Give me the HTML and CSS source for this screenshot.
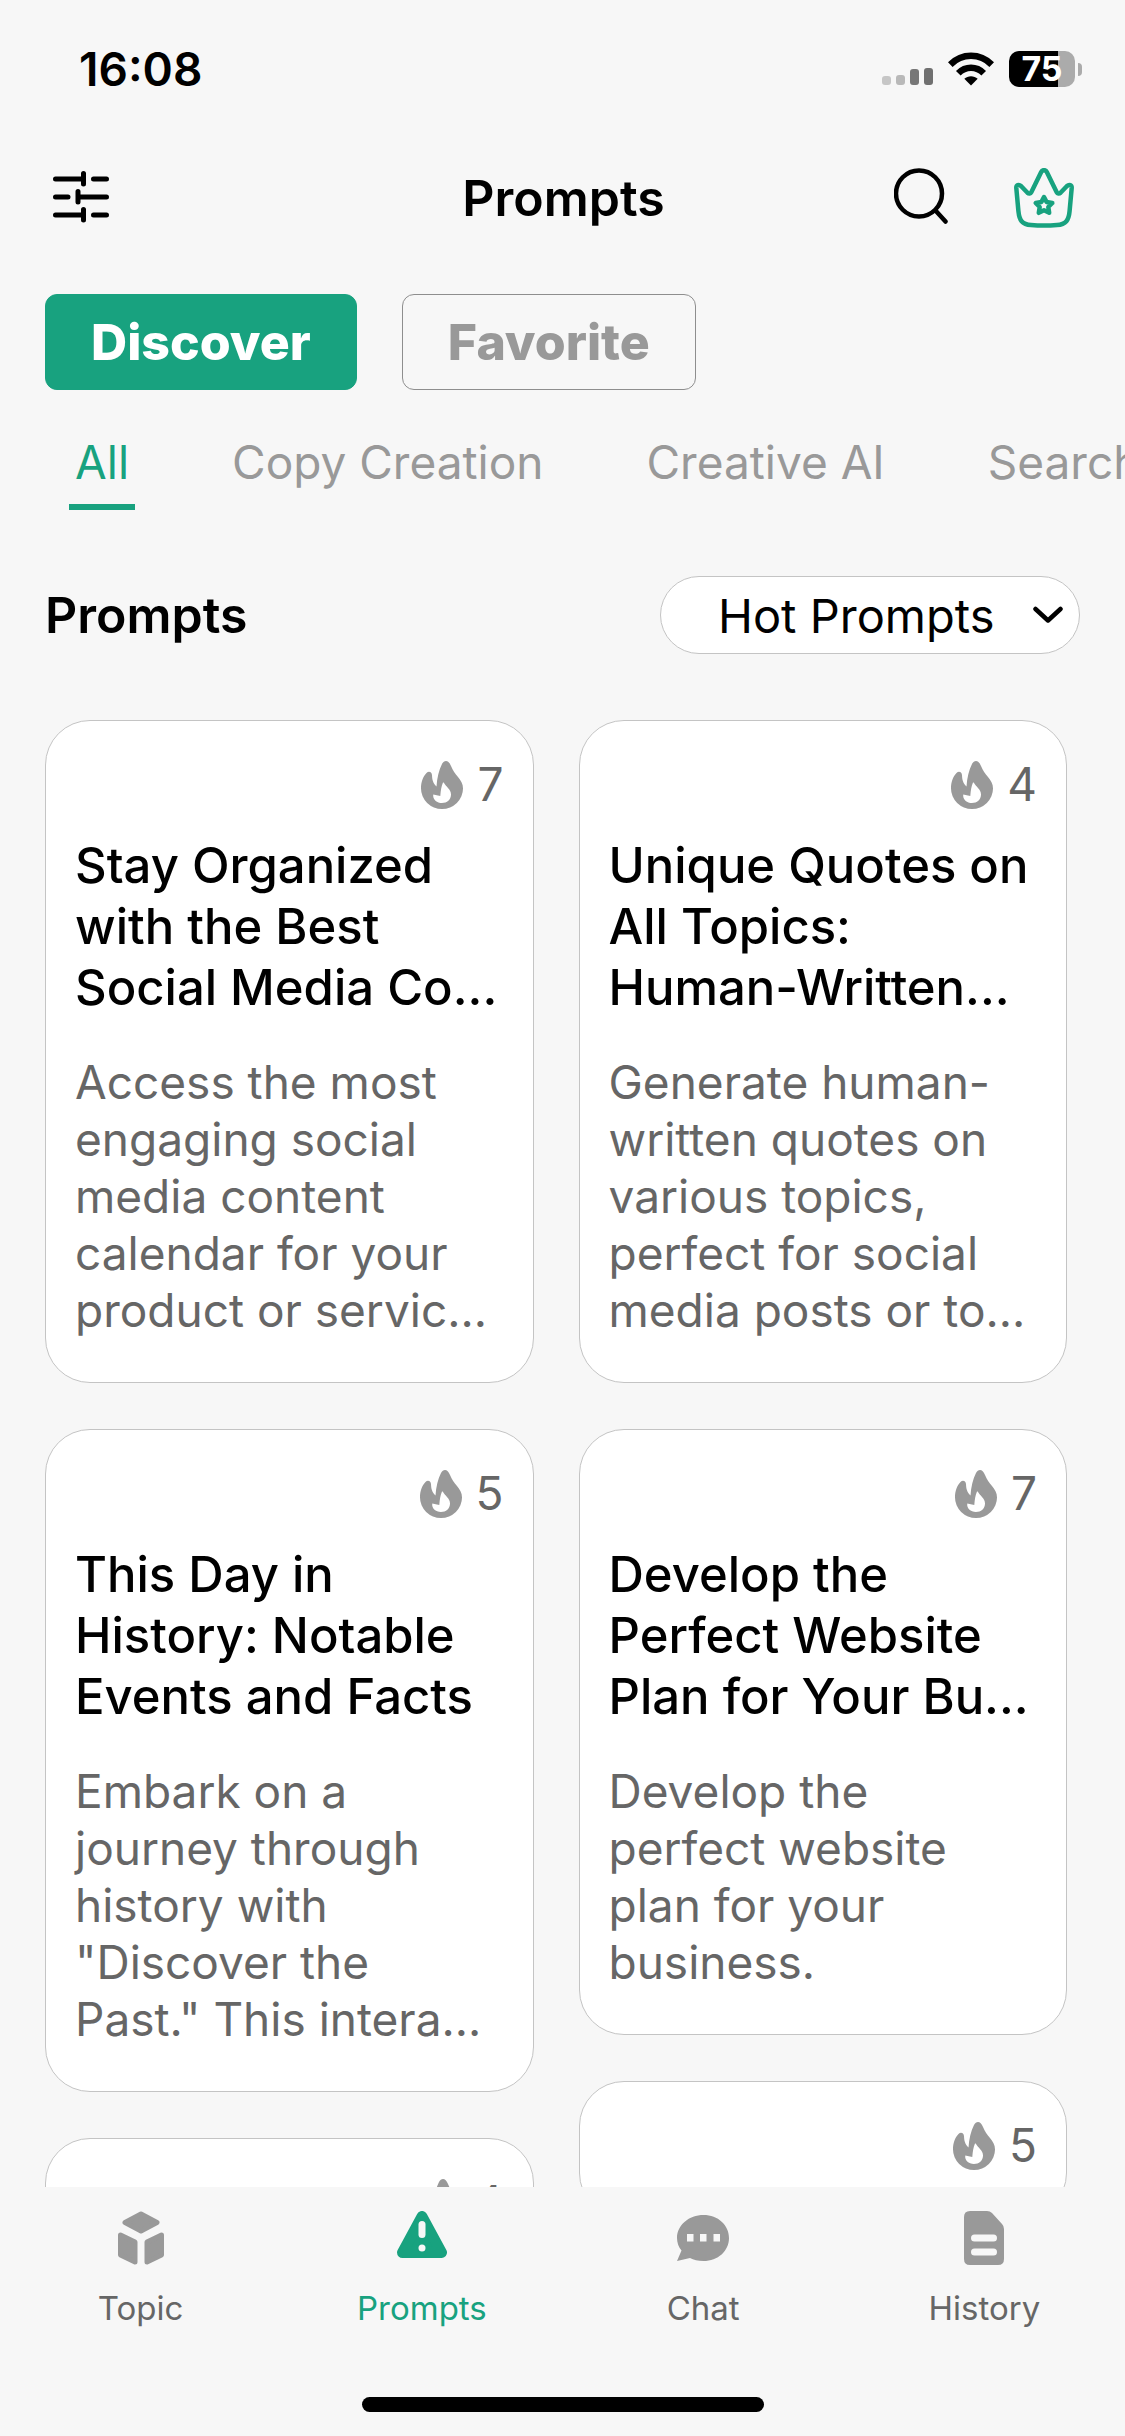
FILE: index.html
```html
<!DOCTYPE html>
<html lang="en">
<head>
<meta charset="utf-8">
<meta name="viewport" content="width=device-width">
<title>Prompts</title>
<link rel="stylesheet" href="styles.css">
</head>
<body>
<svg class="sprite" aria-hidden="true">
  <symbol id="flame" viewBox="0 0 42 48">
    <path fill-rule="evenodd" d="M25 0C27 0 28.500 1.500 30 5C32 10 34 12.500 37 16C40 19.500 42 23 42 27.500A21 20.500 0 0 1 0 27.500C0 21 2 15.500 5.500 12C7.500 10 10.500 10.500 11 14C11.200 19 12 22 15.500 25.500C16 17 18 9 21 3C22 1 23.500 0 25 0ZM22 21.500C20.500 25 19.800 29 19.300 35L12.300 33.500C11.500 38 15.500 42 21 42C26 42 30 38.500 30 33.500C30 28 25 26 22.700 21.500Z"/>
  </symbol>
</svg>

<div class="status">
  <time class="clock">16:08</time>
  <div class="indicators">
    <svg class="signal" width="51" height="34" viewBox="0 0 51 34" aria-label="Signal">
      <rect x="0" y="24" width="9" height="9" rx="3" fill="#c6c6c6"/>
      <rect x="14" y="23" width="9" height="10" rx="3" fill="#b9b9b9"/>
      <rect x="28" y="17" width="9" height="16" rx="3" fill="#777"/>
      <rect x="42" y="16" width="9" height="17" rx="3" fill="#707070"/>
    </svg>
    <svg class="wifi" width="46" height="34" viewBox="0 0 46 34" aria-label="Wi-Fi">
      <path d="M23 33.500L16.300 26.700C20 23.300 26 23.300 29.700 26.700Z"/>
      <path fill="none" stroke="#000" stroke-width="6.500" d="M10.300 21.300C17.500 14 28.500 14 35.700 21.300M2.300 12.600C14 .9 32 .9 43.700 12.600"/>
    </svg>
    <div class="battery"><span class="charge">75</span><span class="pole"></span></div>
  </div>
</div>

<header class="topbar">
  <button class="icon-button" aria-label="Filters">
    <svg width="56" height="54" viewBox="0 0 56 54" fill="none" stroke="#000" stroke-width="5" stroke-linecap="round">
      <path d="M2.500 8H30M30.500 2.500V13M40.500 8H53.500M2.500 26H15M25 20.500V31M25 26H53.500M2.500 44H30M30.500 38.500V49M40.500 44H53.500"/>
    </svg>
  </button>
  <h1 class="page-title">Prompts</h1>
  <div class="actions">
    <button class="icon-button" aria-label="Search">
      <svg width="54" height="60" viewBox="0 0 54 60" fill="none" stroke="#000" stroke-width="4.500" stroke-linecap="round">
        <circle cx="25" cy="25.500" r="23"/><path d="M41.500 42.500L51.500 53.500"/>
      </svg>
    </button>
    <button class="icon-button" aria-label="Premium">
      <svg width="60" height="60" viewBox="0 0 60 60" fill="none" stroke="#18a27f" stroke-width="4.500" stroke-linejoin="round">
        <path d="M2.300 20C2.100 17 4.800 16 7 18L13.500 24.800C14.800 26 16.500 25.800 17.300 24.200L27.200 4C28.400 1.500 31.600 1.500 32.800 4L42.700 24.200C43.500 25.800 45.200 26 46.500 24.800L53 18C55.200 16 57.900 17 57.700 20L55.600 43C54.800 52 52 56.500 43 57C35 57.700 25 57.700 17 57C8 56.500 5.200 52 4.400 43Z"/>
        <path d="M30 29L32.600 34L38.300 35L34.300 39L35.200 44.800L30 42.300L24.800 44.800L25.700 39L21.700 35L27.400 34Z"/>
      </svg>
    </button>
  </div>
</header>

<div class="modes">
  <button class="mode mode-active">Discover</button>
  <button class="mode">Favorite</button>
</div>

<nav class="categories" aria-label="Categories">
  <a class="category category-active" href="#all">All</a>
  <a class="category" href="#copy">Copy Creation</a>
  <a class="category" href="#creative">Creative AI</a>
  <a class="category" href="#search">Search</a>
</nav>

<div class="list-head">
  <h2 class="list-title">Prompts</h2>
  <div class="sort">
    <select class="sort-select" aria-label="Sort prompts">
      <option>Hot Prompts</option>
    </select>
    <svg class="sort-arrow" width="30" height="18" viewBox="0 0 30 18" fill="none" stroke="#000" stroke-width="4.500" stroke-linecap="round" stroke-linejoin="round"><path d="M2.500 3L15 14.500L27.500 3"/></svg>
  </div>
</div>

<main class="cards">
  <div class="column">
    <article class="card">
      <div class="heat"><svg class="flame"><use href="#flame"/></svg>7</div>
      <h3 class="card-title">Stay Organized with the Best Social Media Co...</h3>
      <p class="card-text">Access the most engaging social media content calendar for your product or servic...</p>
    </article>
    <article class="card">
      <div class="heat"><svg class="flame"><use href="#flame"/></svg>5</div>
      <h3 class="card-title">This Day in History: Notable Events and Facts</h3>
      <p class="card-text">Embark on a journey through history with "Discover the Past." This intera...</p>
    </article>
    <article class="card">
      <div class="heat"><svg class="flame"><use href="#flame"/></svg>4</div>
    </article>
  </div>
  <div class="column">
    <article class="card">
      <div class="heat"><svg class="flame"><use href="#flame"/></svg>4</div>
      <h3 class="card-title">Unique Quotes on All Topics: Human-Written...</h3>
      <p class="card-text">Generate human-written quotes on various topics, perfect for social media posts or to...</p>
    </article>
    <article class="card">
      <div class="heat"><svg class="flame"><use href="#flame"/></svg>7</div>
      <h3 class="card-title">Develop the Perfect Website Plan for Your Bu...</h3>
      <p class="card-text">Develop the perfect website plan for your business.</p>
    </article>
    <article class="card">
      <div class="heat"><svg class="flame"><use href="#flame"/></svg>5</div>
    </article>
  </div>
</main>

<footer class="bottom">
  <nav class="tabs" aria-label="Main">
    <a class="tab" href="#topic">
      <svg width="46" height="54" viewBox="0 0 46 54" fill="#999" stroke="#999" stroke-width="5" stroke-linejoin="round"><path d="M23 3L39 11.500L23 20L7 11.500ZM2.500 24L17 31V51L2.500 44ZM43.500 24L29 31V51L43.500 44Z"/></svg>
      Topic
    </a>
    <a class="tab tab-active" href="#prompts">
      <svg width="50" height="54" viewBox="0 0 50 54"><path fill="#18a27f" stroke="#18a27f" stroke-width="11" stroke-linejoin="round" d="M25 5.500L44.500 41.500H5.500Z"/><rect x="21.500" y="10" width="7" height="17" rx="3.500" fill="#f7f7f7"/><circle cx="25" cy="37" r="3.500" fill="#f7f7f7"/></svg>
      Prompts
    </a>
    <a class="tab" href="#chat">
      <svg width="52" height="54" viewBox="0 0 52 54"><path fill="#999" d="M26.500 4C41 4 52 14 52 27C52 40 41 50 26.500 50C21 50 16.500 49 13 47L0 50L4.500 39.500C1.500 36 0 31.500 0 27C0 14 12 4 26.500 4Z"/><path fill="#f7f7f7" d="M10 23h6.500v7.500H10ZM23 23h6.500v7.500H23ZM36.500 23H43v7.500H36.500Z"/></svg>
      Chat
    </a>
    <a class="tab" href="#history">
      <svg width="40" height="54" viewBox="0 0 40 54"><path fill="#999" d="M6 0H23Q26 0 28 2L38 13Q40 15 40 18V48Q40 54 34 54H6Q0 54 0 48V6Q0 0 6 0Z"/><path stroke="#f7f7f7" stroke-width="7" stroke-linecap="round" d="M10.500 27H29.500M10.500 41H29.500"/></svg>
      History
    </a>
  </nav>
  <div class="home-indicator"></div>
</footer>
</body>
</html>
```
FILE: styles.css
```css
* { box-sizing: border-box; }

body {
  margin: 0;
  height: 100vh;
  display: flex;
  flex-direction: column;
  overflow: hidden;
  background: #f7f7f7;
  color: #000;
  font-family: Inter, "Liberation Sans", sans-serif;
  font-size: 46px;
}

button, select { font: inherit; color: inherit; }
button { cursor: pointer; }
a { text-decoration: none; color: inherit; }
h1, h2, h3, p { margin: 0; }
svg { display: block; flex: none; }

.sprite { position: absolute; width: 0; height: 0; }

/* Status bar */
.status {
  display: flex;
  justify-content: space-between;
  align-items: center;
  height: 138px;
  padding: 0 43px 0 79px;
}
.clock { font-weight: 600; }
.indicators { display: flex; align-items: center; gap: 15px; }
.battery { display: flex; align-items: center; gap: 3px; }
.charge {
  width: 66px;
  height: 36px;
  border-radius: 10px;
  background: linear-gradient(to right, #000 75%, #ababab 75%);
  color: #fff;
  font-size: 34px;
  font-weight: 700;
  line-height: 36px;
  text-align: center;
}
.pole { width: 4px; height: 13px; border-radius: 0 4px 4px 0; background: #ababab; }

/* Title bar */
.topbar {
  display: grid;
  grid-template-columns: 1fr auto 1fr;
  align-items: center;
  height: 120px;
  padding: 0 51px 0 53px;
}
.icon-button { padding: 0; border: 0; background: none; }
.topbar > .icon-button { justify-self: start; }
.page-title { font-size: 50px; font-weight: 600; line-height: 60px; }
.actions { display: flex; justify-content: flex-end; gap: 66px; }

/* Discover / Favorite switch */
.modes { display: flex; gap: 45px; padding: 36px 45px 0; }
.mode {
  height: 96px;
  padding: 0 45px;
  border: 1px solid #8e8e8e;
  border-radius: 12px;
  background: none;
  color: #999;
  font-size: 50px;
  font-weight: 800;
}
.mode-active { border-color: #18a27f; background: #18a27f; color: #fff; }

/* Category tabs */
.categories {
  display: flex;
  gap: 91px;
  padding: 32px 0 0 69px;
  overflow: hidden;
  white-space: nowrap;
}
.category {
  flex: none;
  padding: 12px 6px 14px;
  border-bottom: 6px solid transparent;
  color: #999;
  line-height: 56px;
}
.category-active { border-color: #18a27f; color: #18a27f; }

/* List heading */
.list-head {
  display: flex;
  justify-content: space-between;
  align-items: center;
  padding: 66px 45px;
}
.list-title { font-size: 50px; font-weight: 600; line-height: 60px; }
.sort { display: grid; align-items: center; width: 420px; }
.sort-select {
  grid-area: 1 / 1;
  width: 100%;
  height: 78px;
  padding: 0 57px;
  border: 1px solid #c4c4c4;
  border-radius: 39px;
  background: #fff;
  font-size: 47px;
  appearance: none;
}
.sort-arrow { grid-area: 1 / 1; justify-self: end; margin-right: 17px; pointer-events: none; }

/* Cards */
.cards {
  flex: 1;
  min-height: 0;
  display: grid;
  grid-template-columns: 1fr 1fr;
  gap: 45px;
  padding: 0 58px 0 45px;
  overflow: hidden;
}
.column { display: flex; flex-direction: column; gap: 46px; min-width: 0; }
.card {
  flex: none;
  padding: 35px 29px 43px;
  border: 1px solid #c4c4c4;
  border-radius: 45px;
  background: #fff;
}
.heat {
  display: flex;
  justify-content: flex-end;
  align-items: center;
  gap: 14px;
  color: #666;
  line-height: 57px;
}
.flame { width: 42px; height: 48px; fill: #999; }
.card-title { margin-top: 22px; font-size: 49px; font-weight: 500; line-height: 61px; }
.card-text { margin-top: 36px; color: #666; line-height: 57px; }

/* Bottom bar */
.bottom { flex: none; padding-bottom: 24px; }
.tabs { display: grid; grid-template-columns: repeat(4, 1fr); padding: 24px 0 68px; }
.tab {
  display: flex;
  flex-direction: column;
  align-items: center;
  gap: 22px;
  color: #666;
  font-size: 33px;
  line-height: 42px;
}
.tab-active { color: #18a27f; }
.home-indicator { width: 402px; height: 15px; margin: 0 auto; border-radius: 8px; background: #000; }
```
